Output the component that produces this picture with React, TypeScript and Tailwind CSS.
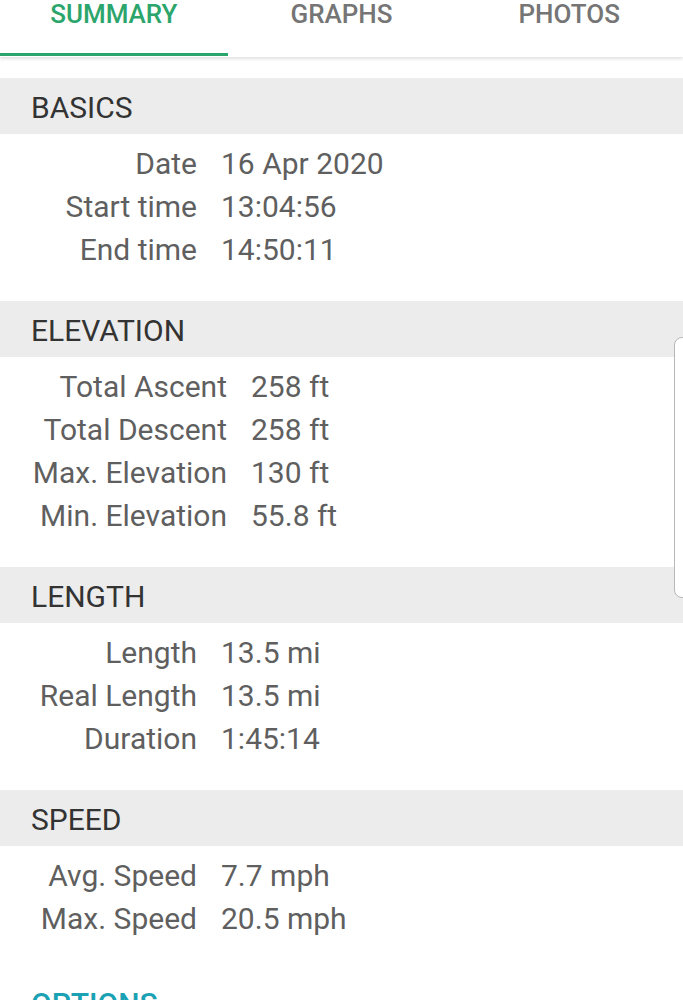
import React from "react";

type Row = [string, string];

const sections: { title: string; labelWidth: string; rows: Row[] }[] = [
  {
    title: "BASICS",
    labelWidth: "w-[197px]",
    rows: [
      ["Date", "16 Apr 2020"],
      ["Start time", "13:04:56"],
      ["End time", "14:50:11"],
    ],
  },
  {
    title: "ELEVATION",
    labelWidth: "w-[227px]",
    rows: [
      ["Total Ascent", "258 ft"],
      ["Total Descent", "258 ft"],
      ["Max. Elevation", "130 ft"],
      ["Min. Elevation", "55.8 ft"],
    ],
  },
  {
    title: "LENGTH",
    labelWidth: "w-[197px]",
    rows: [
      ["Length", "13.5 mi"],
      ["Real Length", "13.5 mi"],
      ["Duration", "1:45:14"],
    ],
  },
  {
    title: "SPEED",
    labelWidth: "w-[197px]",
    rows: [
      ["Avg. Speed", "7.7 mph"],
      ["Max. Speed", "20.5 mph"],
    ],
  },
];

function Tabs() {
  const tabs = ["SUMMARY", "GRAPHS", "PHOTOS"];
  return (
    <div className="relative z-10 grid h-[57px] grid-cols-3 bg-white shadow-[0_2px_3px_rgba(0,0,0,0.12)]">
      {tabs.map((t, i) => (
        <div key={t} className="relative flex justify-center">
          <span
            className={
              "mt-[1px] h-[26px] text-[26px] font-medium leading-[26px] " +
              (i === 0 ? "text-[#2ca56c]" : "text-[#757575]")
            }
          >
            {t}
          </span>
          {i === 0 && <div className="absolute bottom-[1px] left-0 right-0 h-[3px] bg-[#2ca56c]" />}
        </div>
      ))}
    </div>
  );
}

function Section({ title, labelWidth, rows }: (typeof sections)[number]) {
  return (
    <div>
      <div className="flex h-[56px] items-center bg-[#ececec] pl-[31px] pt-[2px] text-[30px] text-[#333333]">
        {title}
      </div>
      <div className="flex flex-col pt-[8px] pb-[30px]">
        {rows.map(([label, value]) => (
          <div key={label} className="flex h-[43px] items-center text-[30px] text-[#5f5f5f]">
            <span className={labelWidth + " shrink-0 text-right"}>{label}</span>
            <span className="ml-[24px]">{value}</span>
          </div>
        ))}
      </div>
    </div>
  );
}

export default function App() {
  return (
    <div
      className="relative h-[1000px] w-[683px] overflow-hidden bg-white"
      style={{ fontFamily: "Roboto, 'Noto Sans', sans-serif" }}
    >
      <Tabs />
      <div className="h-[21px]" />
      {sections.map((s) => (
        <Section key={s.title} {...s} />
      ))}
      <div className="pl-[31px] pt-[16px] text-[30px] font-medium leading-[36px] text-[#1ba1b4]">OPTIONS</div>

      {/* scroll handle */}
      <div className="absolute left-[674px] top-[337px] h-[261px] w-[20px] rounded-[8px] border border-[#b8b8b8] bg-white" />
    </div>
  );
}
